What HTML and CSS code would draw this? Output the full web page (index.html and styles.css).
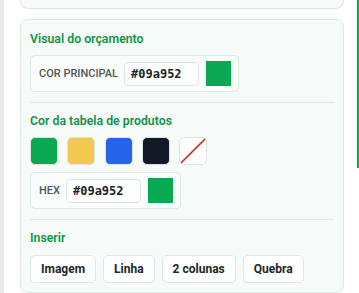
FILE: index.html
```html
<!DOCTYPE html>
<html lang="pt">
<head>
<meta charset="utf-8">
<link rel="stylesheet" href="styles.css">
</head>
<body>
<div class="page">
  <div class="rail"></div>
  <div class="panel">
    <div class="card card-top"></div>
    <div class="card">
      <section class="sec">
        <h3 class="title">Visual do orçamento</h3>
        <div class="field">
          <span class="label">COR PRINCIPAL</span>
          <span class="input">#09a952</span>
          <span class="chip"></span>
        </div>
      </section>
      <section class="sec">
        <h3 class="title">Cor da tabela de produtos</h3>
        <div class="swatches">
          <span class="sw sw-green"></span>
          <span class="sw sw-yellow"></span>
          <span class="sw sw-blue"></span>
          <span class="sw sw-dark"></span>
          <span class="sw sw-none"><svg width="28" height="28" viewBox="0 0 28 28"><line x1="1" y1="27" x2="27" y2="1" stroke="#d0312d" stroke-width="1.6"/></svg></span>
        </div>
        <div class="field field-hex">
          <span class="label">HEX</span>
          <span class="input">#09a952</span>
          <span class="chip"></span>
        </div>
      </section>
      <section class="sec">
        <h3 class="title">Inserir</h3>
        <div class="buttons">
          <button class="btn">Imagem</button>
          <button class="btn">Linha</button>
          <button class="btn">2 colunas</button>
          <button class="btn">Quebra</button>
        </div>
      </section>
    </div>
  </div>
  <div class="thumb"></div>
</div>
</body>
</html>
```
FILE: styles.css
```css
* { box-sizing: border-box; }
html, body { margin: 0; padding: 0; background: #ffffff; }
body { font-family: Roboto, "Noto Sans", sans-serif; }

.page {
  display: flex;
  width: 359px;
  height: 293px;
  overflow: hidden;
  position: relative;
}
.rail { width: 4px; background: #e7e9e8; flex: none; }
.panel {
  flex: 1;
  padding: 0 15px 0 16px;
  display: flex;
  flex-direction: column;
  gap: 10px;
}
.card {
  background: #f6faf8;
  border: 1px solid #dde9e3;
  border-radius: 8px;
  padding: 11px 9px 9px;
}
.card-top {
  height: 10px;
  padding: 0;
  border-top: none;
  border-radius: 0 0 8px 8px;
}
.sec + .sec {
  border-top: 1px solid #dde9e3;
  margin-top: 10px;
  padding-top: 10px;
}
.title {
  margin: 0 0 8px;
  font-size: 12.3px;
  line-height: 16px;
  font-weight: 600;
  color: #0d9447;
}
.sec:last-child .title { margin-bottom: 9px; }

.field {
  display: inline-flex;
  align-items: center;
  gap: 6px;
  padding: 5px 7px;
  border: 1px solid #dde9e3;
  border-radius: 5px;
  background: #fbfdfc;
}
.label {
  font-size: 11px;
  font-weight: 500;
  color: #4f5854;
  margin-left: 1px;
}
.input {
  display: flex;
  align-items: center;
  width: 75px;
  height: 24px;
  padding: 0 6px;
  background: #ffffff;
  border: 1px solid #dde5e1;
  border-radius: 4px;
  font-family: "DejaVu Sans Mono", monospace;
  font-weight: bold;
  font-size: 12px;
  color: #1b1f1d;
}
.chip {
  width: 25px;
  height: 25px;
  background: #09a952;
  margin-left: 1px;
}
.field-hex { margin-top: 7px; }

.swatches { display: flex; gap: 9.3px; }
.sw {
  width: 28px;
  height: 28px;
  border-radius: 5px;
  border: 1px solid #dbe5e0;
  display: block;
  overflow: hidden;
}
.sw svg { display: block; margin: -1px; }
.sw-green { background: #09a952; }
.sw-yellow { background: #f2c94c; }
.sw-blue { background: #2563eb; }
.sw-dark { background: #111827; }
.sw-none { background: #ffffff; }

.buttons { display: flex; gap: 7px; }
.btn {
  height: 28px;
  padding: 0 10px;
  background: #ffffff;
  border: 1px solid #dde9e3;
  border-radius: 5px;
  font-family: Roboto, "Noto Sans", sans-serif;
  font-size: 12px;
  font-weight: 700;
  color: #1e2622;
}
.thumb {
  position: absolute;
  left: 357px;
  top: 0;
  width: 2px;
  height: 168px;
  background: #0da84a;
}
```
